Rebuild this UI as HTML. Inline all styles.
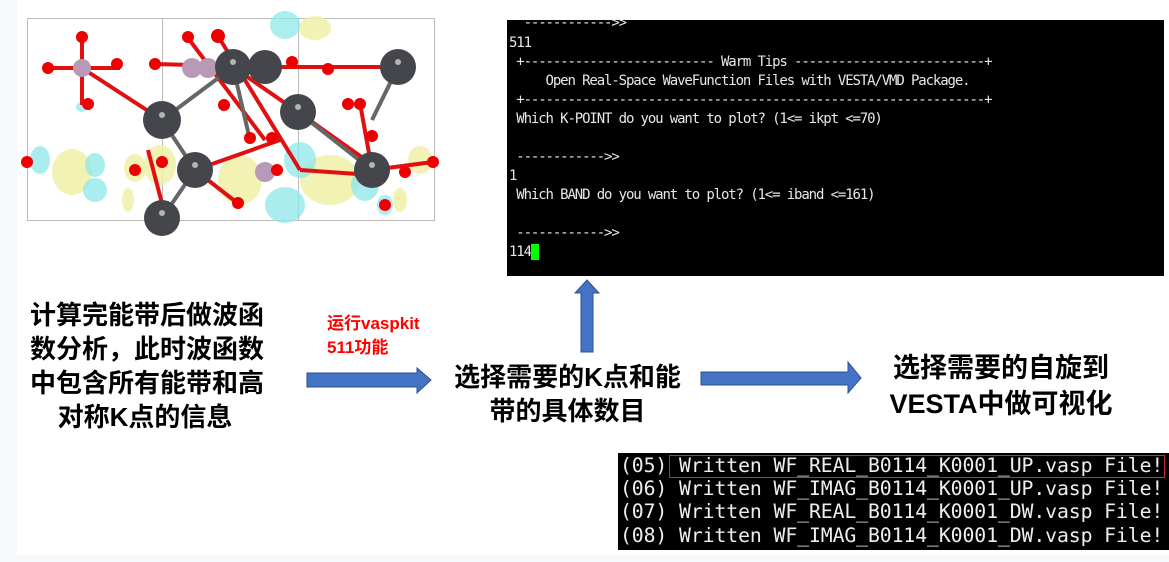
<!DOCTYPE html>
<html><head><meta charset="utf-8"><style>
body{margin:0;width:1169px;height:562px;background:#f7f8fc;position:relative;overflow:hidden;font-family:"Liberation Sans","Noto Sans CJK SC",sans-serif}
.main{position:absolute;left:17px;top:0;width:1152px;height:555px;background:#fff}
.t{position:absolute;font-weight:bold;color:#000;white-space:nowrap}
.term{position:absolute;left:507px;top:20px;width:657px;height:256px;background:#000;color:#e8e8e8;font-family:"DejaVu Sans Mono","Liberation Mono",monospace;font-size:14px;letter-spacing:-1.12px}
.term div{position:absolute;left:2px;white-space:pre;line-height:19px}
.term2{position:absolute;left:618px;top:453px;width:551px;height:97px;background:#000;color:#eee;font-family:"DejaVu Sans Mono","Liberation Mono",monospace;font-size:19.8px}
.term2 div{position:absolute;left:2px;white-space:pre;line-height:23px;letter-spacing:-0.1px}
</style></head><body>
<div class="main"></div>
<svg style="position:absolute;left:0;top:0" width="460" height="240">
<rect x="27.5" y="18.5" width="407" height="202" fill="none" stroke="#bbb"/>
<line x1="162.5" y1="18" x2="162.5" y2="221" stroke="#bbb"/>
<line x1="298.5" y1="18" x2="298.5" y2="221" stroke="#bbb"/>
<g fill="#f0f0a8" opacity="0.85">
<ellipse cx="72" cy="172" rx="20" ry="23"/><ellipse cx="135" cy="168" rx="11" ry="14"/><ellipse cx="160" cy="165" rx="16" ry="20"/>
<ellipse cx="240" cy="180" rx="22" ry="25"/><ellipse cx="330" cy="180" rx="30" ry="25"/><ellipse cx="420" cy="160" rx="12" ry="14"/>
<ellipse cx="315" cy="28" rx="16" ry="12"/><ellipse cx="128" cy="200" rx="6" ry="12"/><ellipse cx="400" cy="200" rx="7" ry="12"/>
</g>
<g fill="#8ee8ea" opacity="0.75">
<ellipse cx="40" cy="160" rx="10" ry="14"/><ellipse cx="95" cy="190" rx="12" ry="12"/><ellipse cx="95" cy="165" rx="10" ry="12"/>
<ellipse cx="285" cy="25" rx="15" ry="14"/><ellipse cx="285" cy="205" rx="20" ry="18"/><ellipse cx="300" cy="160" rx="16" ry="18"/>
<ellipse cx="365" cy="185" rx="14" ry="16"/><ellipse cx="385" cy="205" rx="8" ry="10"/><ellipse cx="82" cy="107" rx="6" ry="5"/>
</g>
<g stroke="#e01010" stroke-width="4">
<line x1="48" y1="68" x2="120" y2="68"/><line x1="82" y1="38" x2="82" y2="105"/><line x1="82" y1="68" x2="162" y2="120"/>
<line x1="155" y1="64" x2="265" y2="67"/><line x1="265" y1="67" x2="398" y2="67"/><line x1="233" y1="67" x2="298" y2="112"/>
<line x1="188" y1="38" x2="265" y2="140"/><line x1="218" y1="36" x2="300" y2="170"/><line x1="195" y1="170" x2="280" y2="140"/>
<line x1="360" y1="103" x2="372" y2="170"/><line x1="298" y1="112" x2="380" y2="170"/><line x1="195" y1="170" x2="240" y2="205"/>
<line x1="300" y1="170" x2="372" y2="175"/><line x1="372" y1="170" x2="433" y2="162"/><line x1="148" y1="150" x2="165" y2="215"/>
</g>
<g stroke="#666" stroke-width="4">
<line x1="162" y1="120" x2="233" y2="67"/><line x1="162" y1="120" x2="195" y2="170"/><line x1="195" y1="170" x2="162" y2="218"/>
<line x1="233" y1="67" x2="250" y2="140"/><line x1="298" y1="112" x2="372" y2="170"/><line x1="398" y1="67" x2="372" y2="120"/>
</g>
<g fill="#b89ab8"><circle cx="82" cy="68" r="9"/><circle cx="192" cy="68" r="10"/><circle cx="208" cy="68" r="10"/><circle cx="265" cy="172" r="10"/></g>
<g fill="#44464c">
<circle cx="233" cy="67" r="18"/><circle cx="265" cy="67" r="17"/><circle cx="398" cy="67" r="18"/><circle cx="162" cy="120" r="19"/>
<circle cx="298" cy="112" r="18"/><circle cx="195" cy="170" r="18"/><circle cx="372" cy="170" r="18"/><circle cx="162" cy="218" r="18"/>
</g>
<g fill="#fff" opacity="0.6"><circle cx="233" cy="62" r="3"/><circle cx="398" cy="62" r="3"/><circle cx="162" cy="115" r="3"/><circle cx="298" cy="107" r="3"/><circle cx="195" cy="165" r="3"/><circle cx="372" cy="165" r="3"/><circle cx="162" cy="213" r="3"/></g>
<g fill="#e00">
<circle cx="82" cy="37" r="6"/><circle cx="48" cy="68" r="6"/><circle cx="117" cy="64" r="6"/><circle cx="155" cy="64" r="6"/><circle cx="88" cy="104" r="6"/>
<circle cx="188" cy="37" r="6"/><circle cx="218" cy="36" r="7"/><circle cx="292" cy="62" r="6"/><circle cx="328" cy="69" r="6"/><circle cx="224" cy="105" r="6"/>
<circle cx="250" cy="138" r="6"/><circle cx="272" cy="138" r="6"/><circle cx="348" cy="104" r="6"/><circle cx="360" cy="104" r="6"/><circle cx="372" cy="136" r="6"/>
<circle cx="27" cy="162" r="6"/><circle cx="162" cy="162" r="6"/><circle cx="135" cy="170" r="6"/><circle cx="277" cy="170" r="6"/><circle cx="238" cy="203" r="6"/>
<circle cx="433" cy="162" r="6"/><circle cx="405" cy="172" r="6"/><circle cx="385" cy="205" r="6"/>
</g>
</svg>
<div class="term">
<div style="top:-6px">  ------------&gt;&gt;</div>
<div style="top:14px">511</div>
<div style="top:33px"> +-------------------------- Warm Tips --------------------------+</div>
<div style="top:52px">     Open Real-Space WaveFunction Files with VESTA/VMD Package.</div>
<div style="top:71px"> +---------------------------------------------------------------+</div>
<div style="top:90px"> Which K-POINT do you want to plot? (1&lt;= ikpt &lt;=70)</div>
<div style="top:128px"> ------------&gt;&gt;</div>
<div style="top:147px">1</div>
<div style="top:166px"> Which BAND do you want to plot? (1&lt;= iband &lt;=161)</div>
<div style="top:204px"> ------------&gt;&gt;</div>
<div style="top:223px">114<span style="background:#0f0;color:#0f0;letter-spacing:0">_</span></div>
</div>
<svg style="position:absolute;left:0;top:0" width="1169" height="562">
<path d="M581 352V293H575L587 280L599 293H593V352Z" fill="#4472c4" stroke="#2f528f" stroke-width="1"/>
<path d="M307 373H417V368L431 380L417 393V387H307Z" fill="#4472c4" stroke="#2f528f" stroke-width="1"/>
<path d="M701 372H848V362L861 378L848 393V385H701Z" fill="#4472c4" stroke="#2f528f" stroke-width="1"/>
</svg>
<div class="t" style="left:30px;top:298px;font-size:26px;line-height:34px;text-align:center;width:230px">计算完能带后做波函<br>数分析，此时波函数<br>中包含所有能带和高<br>对称K点的信息</div>
<div class="t" style="left:327px;top:312px;font-size:17px;line-height:24px;color:#f00">运行vaspkit<br>511功能</div>
<div class="t" style="left:440px;top:360px;font-size:26px;line-height:34px;text-align:center;width:255px">选择需要的K点和能<br>带的具体数目</div>
<div class="t" style="left:880px;top:350px;font-size:27px;line-height:36px;text-align:center;width:242px">选择需要的自旋到<br>VESTA中做可视化</div>
<div class="term2">
<div style="top:1px">(05) Written WF_REAL_B0114_K0001_UP.vasp File!</div>
<div style="top:24px">(06) Written WF_IMAG_B0114_K0001_UP.vasp File!</div>
<div style="top:47px">(07) Written WF_REAL_B0114_K0001_DW.vasp File!</div>
<div style="top:71px">(08) Written WF_IMAG_B0114_K0001_DW.vasp File!</div>
<div style="left:51px;top:2px;width:494px;height:21px;border:1px solid #c03030"></div>
</div>
</body></html>
